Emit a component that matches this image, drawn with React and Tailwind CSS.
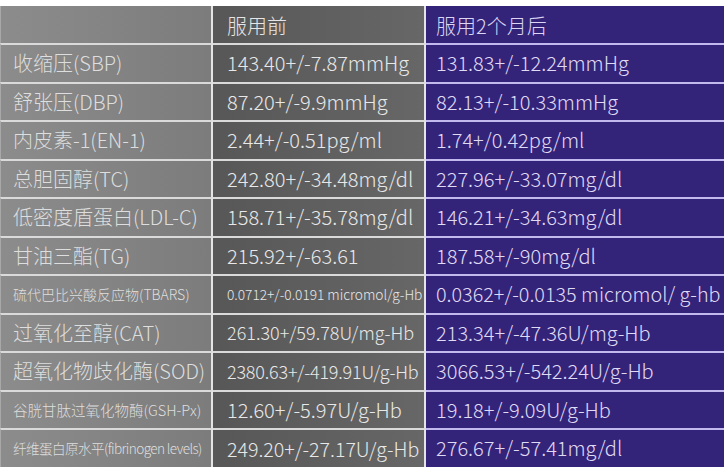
import React from "react";

const rows = [
  { a: "收缩压(SBP)", b: "143.40+/-7.87mmHg", c: "131.83+/-12.24mmHg" },
  { a: "舒张压(DBP)", b: "87.20+/-9.9mmHg", c: "82.13+/-10.33mmHg" },
  { a: "内皮素-1(EN-1)", b: "2.44+/-0.51pg/ml", c: "1.74+/0.42pg/ml" },
  { a: "总胆固醇(TC)", b: "242.80+/-34.48mg/dl", c: "227.96+/-33.07mg/dl" },
  { a: "低密度盾蛋白(LDL-C)", b: "158.71+/-35.78mg/dl", c: "146.21+/-34.63mg/dl" },
  { a: "甘油三酯(TG)", b: "215.92+/-63.61", c: "187.58+/-90mg/dl" },
  {
    a: "硫代巴比兴酸反应物(TBARS)",
    aCls: "text-[14px]",
    b: "0.0712+/-0.0191 micromol/g-Hb",
    bCls: "text-[13.7px]",
    c: "0.0362+/-0.0135 micromol/ g-hb",
    cCls: "text-[19.8px]",
  },
  { a: "过氧化至醇(CAT)", b: "261.30+/59.78U/mg-Hb", bCls: "text-[18px]", c: "213.34+/-47.36U/mg-Hb" },
  { a: "超氧化物歧化酶(SOD)", b: "2380.63+/-419.91U/g-Hb", bCls: "text-[18px] tracking-[-0.2px]", c: "3066.53+/-542.24U/g-Hb" },
  { a: "谷胱甘肽过氧化物酶(GSH-Px)", aCls: "text-[14.5px]", b: "12.60+/-5.97U/g-Hb", c: "19.18+/-9.09U/g-Hb" },
  {
    a: "纤维蛋白原水平(fibrinogen levels)",
    aCls: "text-[13.6px] tracking-[-0.6px]",
    b: "249.20+/-27.17U/g-Hb",
    bCls: "text-[19.6px]",
    c: "276.67+/-57.41mg/dl",
  },
];

const font = {
  fontFamily:
    '"Noto Sans CJK SC Light", "Noto Sans CJK SC DemiLight", "Noto Sans CJK SC", "Noto Sans", sans-serif',
};

export default function App() {
  return (
    <div className="w-[728px] h-[470px] bg-white pt-[6px] overflow-hidden" style={font}>
      <div className="w-[724px] font-light">
        <div className="flex h-[37px]">
          <div className="w-[213px] border-r-2 border-[#e4e4e4] bg-gradient-to-r from-[#8c8c8c] to-[#7c7c7c] border-l border-l-[#a8a8a8]" />
          <div className="w-[213px] border-r-2 border-[#e4e4e4] bg-gradient-to-r from-[#575757] to-[#676767] flex items-center pl-[14px] pt-[3px] text-[20px] text-[#e6e6e6]">
            服用前
          </div>
          <div className="w-[298px] bg-[#33247a] flex items-center pl-[10px] pt-[3px] text-[20px] text-[#dcd6f4]">
            服用2个月后
          </div>
        </div>
        {rows.map((r, i) => (
          <div key={i} className="flex h-[38.5px]">
            <div
              className={`w-[213px] border-t-2 border-t-[#dadada] border-r-2 border-r-[#e4e4e4] border-l border-l-[#a8a8a8] bg-gradient-to-r from-[#8c8c8c] to-[#7c7c7c] flex items-center pl-[12px] text-[#dedede] whitespace-nowrap ${r.aCls || "text-[20px]"}`}
            >
              {r.a}
            </div>
            <div
              className={`w-[213px] border-t-2 border-t-[#dadada] border-r-2 border-r-[#e4e4e4] bg-gradient-to-r from-[#575757] to-[#676767] flex items-center pl-[14px] text-[#e8e8e8] whitespace-nowrap ${r.bCls || "text-[20px]"}`}
            >
              {r.b}
            </div>
            <div
              className={`w-[298px] border-t-2 border-t-[#c2baee] bg-[#33247a] flex items-center pl-[10px] text-[#e0dbf5] whitespace-nowrap ${r.cCls || "text-[20px]"}`}
            >
              {r.c}
            </div>
          </div>
        ))}
      </div>
    </div>
  );
}
